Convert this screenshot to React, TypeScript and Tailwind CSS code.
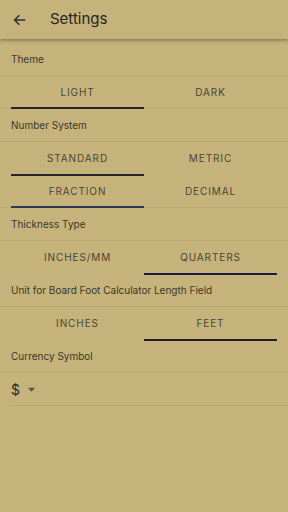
import React, { useState } from 'react'

const font = { fontFamily: 'Inter, "Liberation Sans", sans-serif' }

function Label({ text, first = false }: { text: string; first?: boolean }) {
  return (
    <div
      className={`flex h-[33px] items-center border-b border-[#b9a871] px-[11px] text-[10px] text-[#3b3828] ${first ? 'mt-[4px]' : ''}`}
    >
      {text}
    </div>
  )
}

function Tabs({
  options,
  selected,
  bar = 'bg-[#25252b]',
  divider = false,
}: {
  options: string[]
  selected: number
  bar?: string
  divider?: boolean
}) {
  const [active, setActive] = useState(selected)
  return (
    <div className={`relative h-[33px] ${divider ? 'border-b border-[#b9a871]' : ''}`}>
      <div className="grid h-full grid-cols-2 px-[11px]">
        {options.map((o, i) => (
          <button
            key={o}
            onClick={() => setActive(i)}
            className="relative flex items-center justify-center text-[10px] tracking-[0.9px] text-[#4a4634]"
          >
            {o}
            {active === i && (
              <span className={`absolute inset-x-0 -bottom-px h-[2px] ${bar}`} />
            )}
          </button>
        ))}
      </div>
    </div>
  )
}

export default function App() {
  return (
    <div className="h-[512px] w-[288px] overflow-hidden bg-[#c5b37b]" style={font}>
      {/* App bar */}
      <div className="relative z-10 flex h-[39px] items-center bg-[#c5b37b] shadow-[0_2px_3px_rgba(0,0,0,0.28)]">
        <svg className="ml-[12px] h-[16px] w-[16px]" viewBox="0 0 24 24" fill="none">
          <path d="M20 12H4M11 5l-7 7 7 7" stroke="#2c2c30" strokeWidth="2.2" />
        </svg>
        <span className="ml-[22px] text-[15px] text-[#26241c]">Settings</span>
      </div>

      <Label text="Theme" first />
      <Tabs options={['LIGHT', 'DARK']} selected={0} divider />

      <Label text="Number System" />
      <Tabs options={['STANDARD', 'METRIC']} selected={0} />
      <Tabs options={['FRACTION', 'DECIMAL']} selected={0} bar="bg-[#2f3757]" divider />

      <Label text="Thickness Type" />
      <Tabs options={['INCHES/MM', 'QUARTERS']} selected={1} bar="bg-[#1b1b45]" />

      <Label text="Unit for Board Foot Calculator Length Field" />
      <Tabs options={['INCHES', 'FEET']} selected={1} bar="bg-[#1f1f2a]" />

      <Label text="Currency Symbol" />
      <div className="ml-[11px] flex h-[33px] items-center border-b border-[#b9a871]">
        <span className="text-[14px] text-[#2b2920]">$</span>
        <svg className="ml-[7px] h-[9px] w-[9px]" viewBox="0 0 10 10">
          <path d="M1 3h8L5 7.5z" fill="#5e583f" />
        </svg>
      </div>
    </div>
  )
}
